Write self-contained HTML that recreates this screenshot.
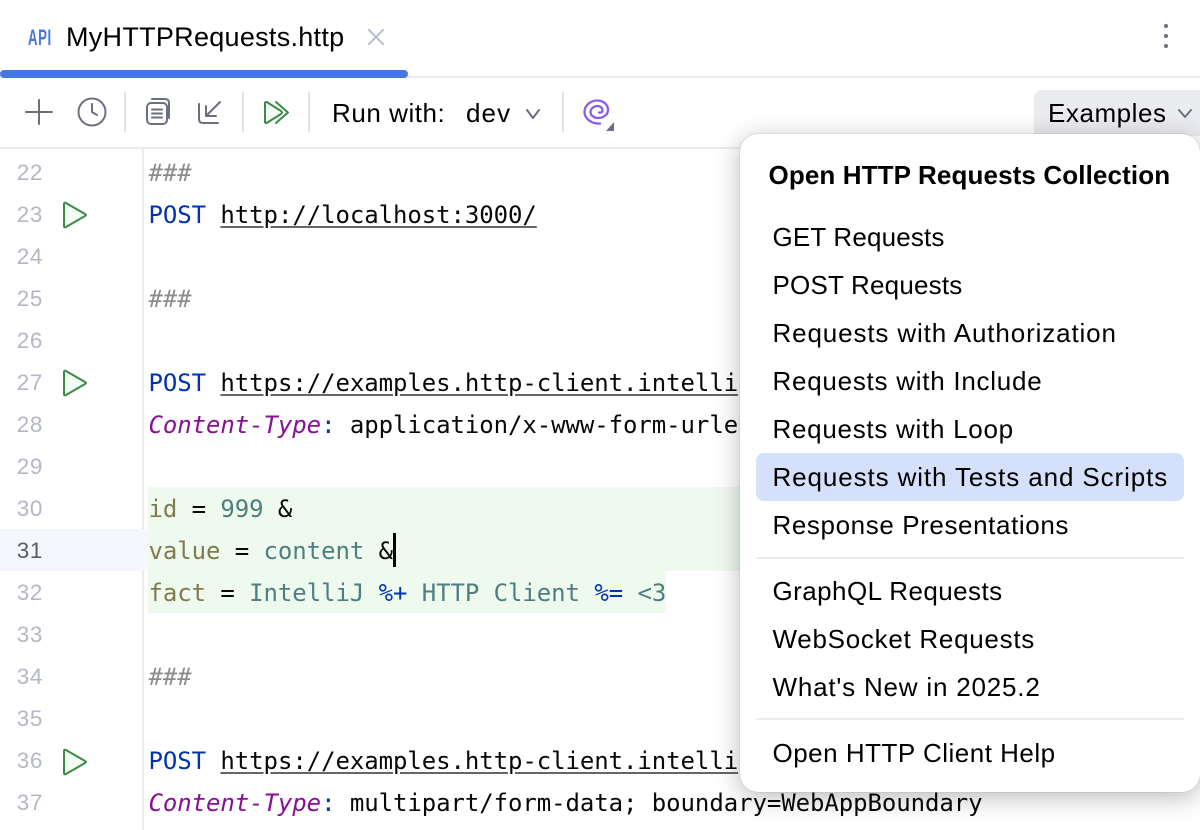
<!DOCTYPE html>
<html><head><meta charset="utf-8">
<style>
html,body{margin:0;padding:0;background:#fff}
#p{position:relative;width:1200px;height:830px;overflow:hidden;background:#fff;font-family:"Liberation Sans",sans-serif;color:#000}
.a{position:absolute}
.t{position:absolute;white-space:pre;line-height:42px;height:42px}
.n{position:absolute;left:0;width:43px;text-align:right;font:22.5px/44px "Liberation Sans",sans-serif;color:#b4b8c5;letter-spacing:.6px}
.c{position:absolute;left:148.500px;white-space:pre;font:24px/44px "DejaVu Sans Mono","Liberation Mono",monospace;letter-spacing:-.07px;color:#080808}
.ui{font-size:26px;letter-spacing:.55px}
.m{position:absolute;left:32.500px;white-space:pre;font-size:26px;line-height:48px;color:#000}
.k{color:#0033b3}.h{color:#7f7b4e}.v{color:#4d7f80}.g{color:#8c8c8c;font-style:italic}.u{text-decoration:underline;text-decoration-color:#666;text-underline-offset:3px}.i{font-style:italic;color:#871094}
.sep{position:absolute;width:2px;top:92px;height:40px;background:#dfe1e8}
</style></head><body><div id="p">
<div class="a" style="left:0;top:76px;width:1200px;height:2px;background:#ebecf0"></div>
<div class="a" style="left:0;top:70px;width:408px;height:8px;border-radius:4px;background:#4577e4"></div>
<div class="t" style="left:28px;top:17px;font-size:22px;font-weight:bold;color:#4577e4;transform:scaleX(.6);transform-origin:0 50%;letter-spacing:1px">API</div>
<div class="t" style="left:66px;top:16px;font-size:27px;letter-spacing:.28px">MyHTTPRequests.http</div>
<svg class="a" style="left:0;top:0" width="1200" height="150" fill="none" stroke-linecap="round" stroke-linejoin="round">
<path d="M369 30L383 44M383 30L369 44" stroke="#b9bdc9" stroke-width="2"/>
<circle cx="1166" cy="26" r="2" fill="#6c707e"/><circle cx="1166" cy="36" r="2" fill="#6c707e"/><circle cx="1166" cy="46" r="2" fill="#6c707e"/>
<path d="M39 100V124M26 112H52" stroke="#6c707e" stroke-width="2"/>
<circle cx="92" cy="112" r="13.500" stroke="#6c707e" stroke-width="2"/><path d="M92 104V112L97 115" stroke="#6c707e" stroke-width="2"/>
<rect x="147" y="103" width="20" height="21" rx="4" stroke="#6c707e" stroke-width="2"/><path d="M152 99H165Q169 99 169 103V118M152 109.500H162M152 113.500H162M152 117.500H162" stroke="#6c707e" stroke-width="2"/>
<path d="M199 104V119Q199 123 203 123H218M220 102L206 116M206 106V116H216" stroke="#6c707e" stroke-width="2"/>
<path d="M265 103.500Q265 101 267.500 102.500L281 111Q283 112.500 281 114L267.500 122.500Q265 124 265 121.500Z" stroke="#3b8a45" stroke-width="2" fill="#f2fcf3"/><path d="M276 102L288 112.500L276 123" stroke="#3b8a45" stroke-width="2"/>
<path d="M527 110L533 118L539 110" stroke="#6c707e" stroke-width="2"/>
<path d="M600 123.500C592 124 584.500 119 584.500 112C584.500 105 591 100.500 597 100.500C604 100.500 608 105 608 110C608 115 603 118 598 118C594 118 590.500 115.500 590.500 112C590.500 108.500 594 106 597.500 106C600.500 106 602.500 108 602.500 110.500C602.500 112 601 113 599 112.500" stroke="#8b5cf0" stroke-width="2.300"/>
<path d="M614 122V131H606Z" fill="#6c707e"/>
</svg>
<div class="sep" style="left:124px"></div><div class="sep" style="left:242px"></div><div class="sep" style="left:308px"></div><div class="sep" style="left:562px"></div>
<div class="t ui" style="left:332px;top:92px">Run with:</div>
<div class="t ui" style="left:466px;top:92px;letter-spacing:1.1px">dev</div>
<div class="a" style="left:0;top:147px;width:1200px;height:2px;background:#ebecf0"></div>
<div class="a" style="left:142px;top:149px;width:2px;height:681px;background:#ebecf0"></div>
<div class="a" style="left:0;top:529px;width:148px;height:42px;background:#f5f7fc"></div>
<div class="a" style="left:148px;top:487px;width:640px;height:84px;background:#effaee"></div>
<div class="a" style="left:148px;top:571px;width:518px;height:42px;background:#effaee"></div>
<div class="n" style="top:151px">22</div><div class="n" style="top:193px">23</div><div class="n" style="top:235px">24</div><div class="n" style="top:277px">25</div><div class="n" style="top:319px">26</div><div class="n" style="top:361px">27</div><div class="n" style="top:403px">28</div><div class="n" style="top:445px">29</div><div class="n" style="top:487px">30</div><div class="n" style="top:529px;color:#5a5d6b">31</div><div class="n" style="top:571px">32</div><div class="n" style="top:613px">33</div><div class="n" style="top:655px">34</div><div class="n" style="top:697px">35</div><div class="n" style="top:739px">36</div><div class="n" style="top:781px">37</div>
<svg class="a" style="left:0;top:150px" width="100" height="680" fill="#f2fcf3" stroke="#3b8a45" stroke-width="2" stroke-linejoin="round">
<path d="M64 54Q64 52 66 53L85 64Q87 65 85 66L66 77Q64 78 64 76Z"/>
<path d="M64 222Q64 220 66 221L85 232Q87 233 85 234L66 245Q64 246 64 244Z"/>
<path d="M64 601Q64 599 66 600L85 611Q87 612 85 613L66 624Q64 625 64 623Z"/>
</svg>
<div class="c g" style="top:151px">###</div>
<div class="c" style="top:193px"><span class="k">POST</span> <span class="u">http://localhost:3000/</span></div>
<div class="c g" style="top:277px">###</div>
<div class="c" style="top:361px"><span class="k">POST</span> <span class="u">https://examples.http-client.intellij.net/post</span></div>
<div class="c" style="top:403px"><span class="i">Content-Type</span><span class="k">:</span> application/x-www-form-urlencoded</div>
<div class="c" style="top:487px"><span class="h">id</span> = <span class="v">999</span> &amp;</div>
<div class="c" style="top:529px"><span class="h">value</span> = <span class="v">content</span> &amp;</div>
<div class="a" style="left:393px;top:533px;width:3px;height:34px;background:#000"></div>
<div class="c" style="top:571px"><span class="h">fact</span> = <span class="v">IntelliJ</span> <span class="k">%+</span> <span class="v">HTTP Client</span> <span class="k">%=</span> <span class="v">&lt;3</span></div>
<div class="c g" style="top:655px">###</div>
<div class="c" style="top:739px"><span class="k">POST</span> <span class="u">https://examples.http-client.intellij.net/post</span></div>
<div class="c" style="top:781px"><span class="i">Content-Type</span><span class="k">:</span> multipart/form-data; boundary=WebAppBoundary</div>
<div class="a" style="left:1034px;top:90px;width:166px;height:46px;border-radius:8px 0 0 0;background:#ebecf0"></div>
<div class="t ui" style="left:1048px;top:92px">Examples</div>
<svg class="a" style="left:1170px;top:100px" width="30" height="30" fill="none"><path d="M9 10L15 17L21 10" stroke="#6c707e" stroke-width="2" stroke-linecap="round" stroke-linejoin="round"/></svg>
<div class="a" style="left:740px;top:134px;width:460px;height:658px;border-radius:18px;background:#fff;box-shadow:0 5px 26px rgba(0,0,0,.28),0 0 1px rgba(0,0,0,.35)">
  <div class="t" style="left:28.500px;top:20px;font-size:26px;font-weight:bold;letter-spacing:.12px">Open HTTP Requests Collection</div>
  <div class="a" style="left:16px;top:319px;width:428px;height:48px;border-radius:8px;background:#d5e0fa"></div>
  <div class="m" style="top:79px;letter-spacing:.17px">GET Requests</div>
  <div class="m" style="top:127px;letter-spacing:.2px">POST Requests</div>
  <div class="m" style="top:175px;letter-spacing:.87px">Requests with Authorization</div>
  <div class="m" style="top:223px;letter-spacing:.74px">Requests with Include</div>
  <div class="m" style="top:271px;letter-spacing:.72px">Requests with Loop</div>
  <div class="m" style="top:319px;letter-spacing:.89px">Requests with Tests and Scripts</div>
  <div class="m" style="top:367px;letter-spacing:.6px">Response Presentations</div>
  <div class="a" style="left:16px;top:423px;width:428px;height:2px;background:#ebecf0"></div>
  <div class="m" style="top:433px;letter-spacing:.44px">GraphQL Requests</div>
  <div class="m" style="top:481px;letter-spacing:.72px">WebSocket Requests</div>
  <div class="m" style="top:529px;letter-spacing:.8px">What's New in 2025.2</div>
  <div class="a" style="left:16px;top:584px;width:428px;height:2px;background:#ebecf0"></div>
  <div class="m" style="top:595px;letter-spacing:.5px">Open HTTP Client Help</div>
</div>
</div></body></html>
